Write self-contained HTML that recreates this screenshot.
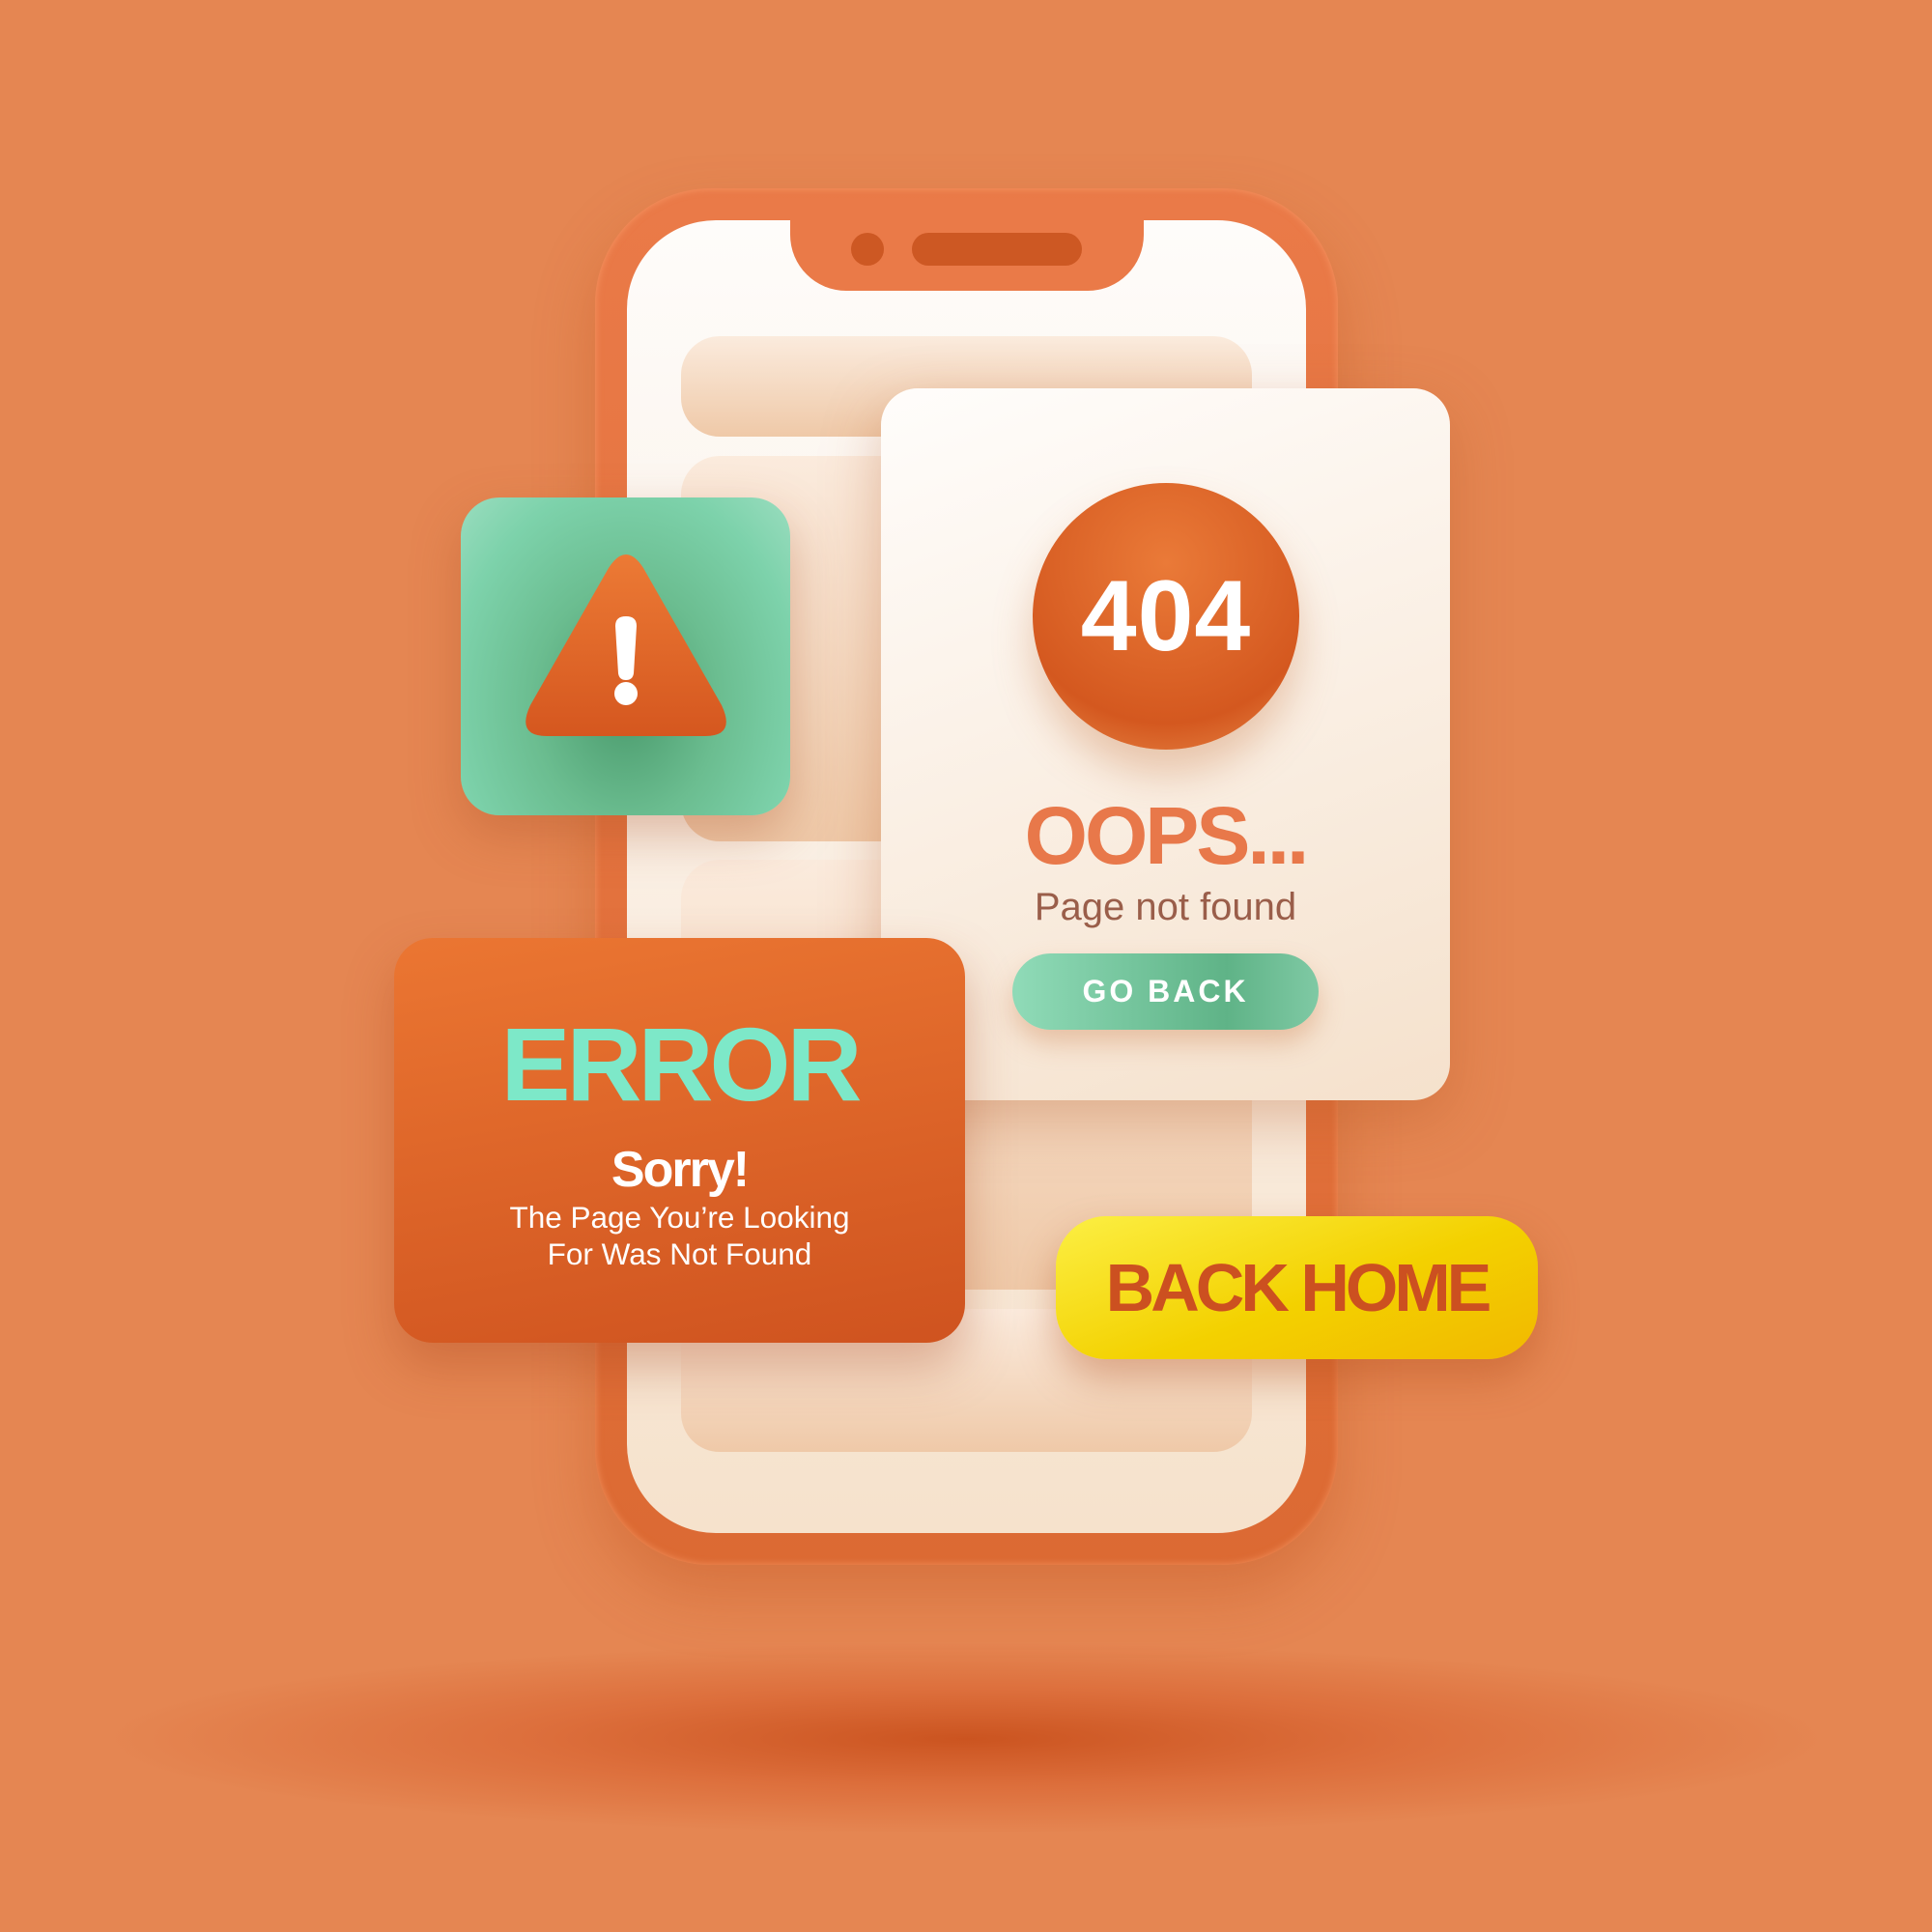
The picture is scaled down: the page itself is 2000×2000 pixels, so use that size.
<!DOCTYPE html>
<html><head><meta charset="utf-8"><style>
*{margin:0;padding:0;box-sizing:border-box}
body{width:2000px;height:2000px;background:#e58652;position:relative;overflow:hidden;font-family:"Liberation Sans",sans-serif}
.a{position:absolute}
.shadow{left:100px;top:1700px;width:1800px;height:200px;border-radius:50%;background:radial-gradient(ellipse at center,#cb5420 0%,rgba(215,95,45,.6) 35%,rgba(229,134,82,0) 70%)}
.phone{left:616px;top:195px;width:769px;height:1425px;border-radius:120px;background:linear-gradient(#ea7a48,#dc6a33);box-shadow:0 30px 60px rgba(190,80,30,.35),inset 0 0 8px rgba(255,170,120,.6)}
.screen{left:649px;top:228px;width:703px;height:1359px;border-radius:92px;background:linear-gradient(#fefcfa,#f6e2cc)}
.notch{left:818px;top:228px;width:366px;height:73px;border-radius:0 0 58px 58px;background:#ea7a48}
.cam{left:881px;top:241px;width:34px;height:34px;border-radius:50%;background:#cd5823}
.spk{left:944px;top:241px;width:176px;height:34px;border-radius:17px;background:#cd5823}
.ph{left:705px;width:591px;border-radius:40px;background:linear-gradient(#fbebdd,#efc9a8)}
.card404{left:912px;top:402px;width:589px;height:737px;border-radius:38px;background:linear-gradient(160deg,#fffdfb,#f5e1cc);box-shadow:0 20px 60px rgba(180,90,40,.35)}
.circ{left:1069px;top:500px;width:276px;height:276px;border-radius:50%;background:radial-gradient(circle at 50% 30%,#ea7a38,#d4581f 70%,#e98b4a 100%);box-shadow:0 25px 40px rgba(200,120,70,.35);color:#fff;font-weight:bold;font-size:104px;text-align:center;line-height:276px;letter-spacing:1px}
.t{text-align:center;white-space:nowrap}
.green{left:477px;top:515px;width:341px;height:329px;border-radius:40px;background:radial-gradient(ellipse at 50% 65%,#4a9a6c 0%,#6bbd90 40%,#7dd2ab 75%,#9addbf 100%);box-shadow:0 20px 50px rgba(170,80,40,.35)}
.err{left:408px;top:971px;width:591px;height:419px;border-radius:40px;background:linear-gradient(170deg,#eb7632,#cf531f);box-shadow:0 25px 50px rgba(170,70,30,.35)}
.goback{left:1048px;top:987px;width:317px;height:79px;border-radius:40px;background:linear-gradient(90deg,#90dbb8,#5fb387 70%,#7fc9a4);box-shadow:0 14px 26px rgba(200,120,70,.35);color:#fff;font-weight:bold;font-size:32px;line-height:79px;letter-spacing:3px}
.home{left:1093px;top:1259px;width:499px;height:148px;border-radius:52px;background:linear-gradient(160deg,#fcef44,#f3d100 55%,#f2b800);box-shadow:0 20px 40px rgba(180,80,30,.4);color:#cc5020;font-weight:bold;font-size:70px;line-height:148px;letter-spacing:-4px}
</style></head><body>
<div class="a shadow"></div>
<div class="a phone"></div>
<div class="a screen"></div>
<div class="a notch"></div>
<div class="a cam"></div>
<div class="a spk"></div>
<div class="a ph" style="top:348px;height:104px"></div>
<div class="a ph" style="top:472px;height:399px"></div>
<div class="a ph" style="top:890px;height:445px"></div>
<div class="a ph" style="top:1355px;height:148px"></div>

<div class="a card404"></div>
<div class="a circ">404</div>
<div class="a t" style="left:912px;width:589px;top:820px;font-size:84px;font-weight:bold;color:#e8784a;letter-spacing:-3px;line-height:90px">OOPS...</div>
<div class="a t" style="left:912px;width:589px;top:916px;font-size:40px;color:#9a5e4a;line-height:46px">Page not found</div>
<div class="a goback t">GO BACK</div>

<div class="a green"></div>
<svg class="a" style="left:477px;top:515px" width="341" height="329" viewBox="477 515 341 329">
<defs><linearGradient id="tg" x1="0" y1="0" x2="0" y2="1"><stop offset="0" stop-color="#ec7a35"/><stop offset="1" stop-color="#d5571f"/></linearGradient></defs>
<path d="M630 588 Q648 560 666 588 L747 730 Q762 762 730 762 L566 762 Q534 762 549 730 Z" fill="url(#tg)"/>
<path d="M637 648 Q637 638 648 638 Q659 638 659 648 L656 697 Q655 704 648 704 Q641 704 640 697 Z" fill="#fff"/>
<circle cx="648" cy="718" r="12" fill="#fff"/>
</svg>

<div class="a err"></div>
<div class="a t" style="left:408px;width:591px;top:1044px;font-size:108px;font-weight:bold;color:#7de8c8;letter-spacing:-4px;line-height:116px">ERROR</div>
<div class="a t" style="left:408px;width:591px;top:1183px;font-size:52px;font-weight:bold;color:#fff;letter-spacing:-2px;line-height:56px">Sorry!</div>
<div class="a t" style="left:408px;width:591px;top:1241px;font-size:31.5px;color:#fff;line-height:38px">The Page You’re Looking<br>For Was Not Found</div>

<div class="a home t">BACK HOME</div>
</body></html>
